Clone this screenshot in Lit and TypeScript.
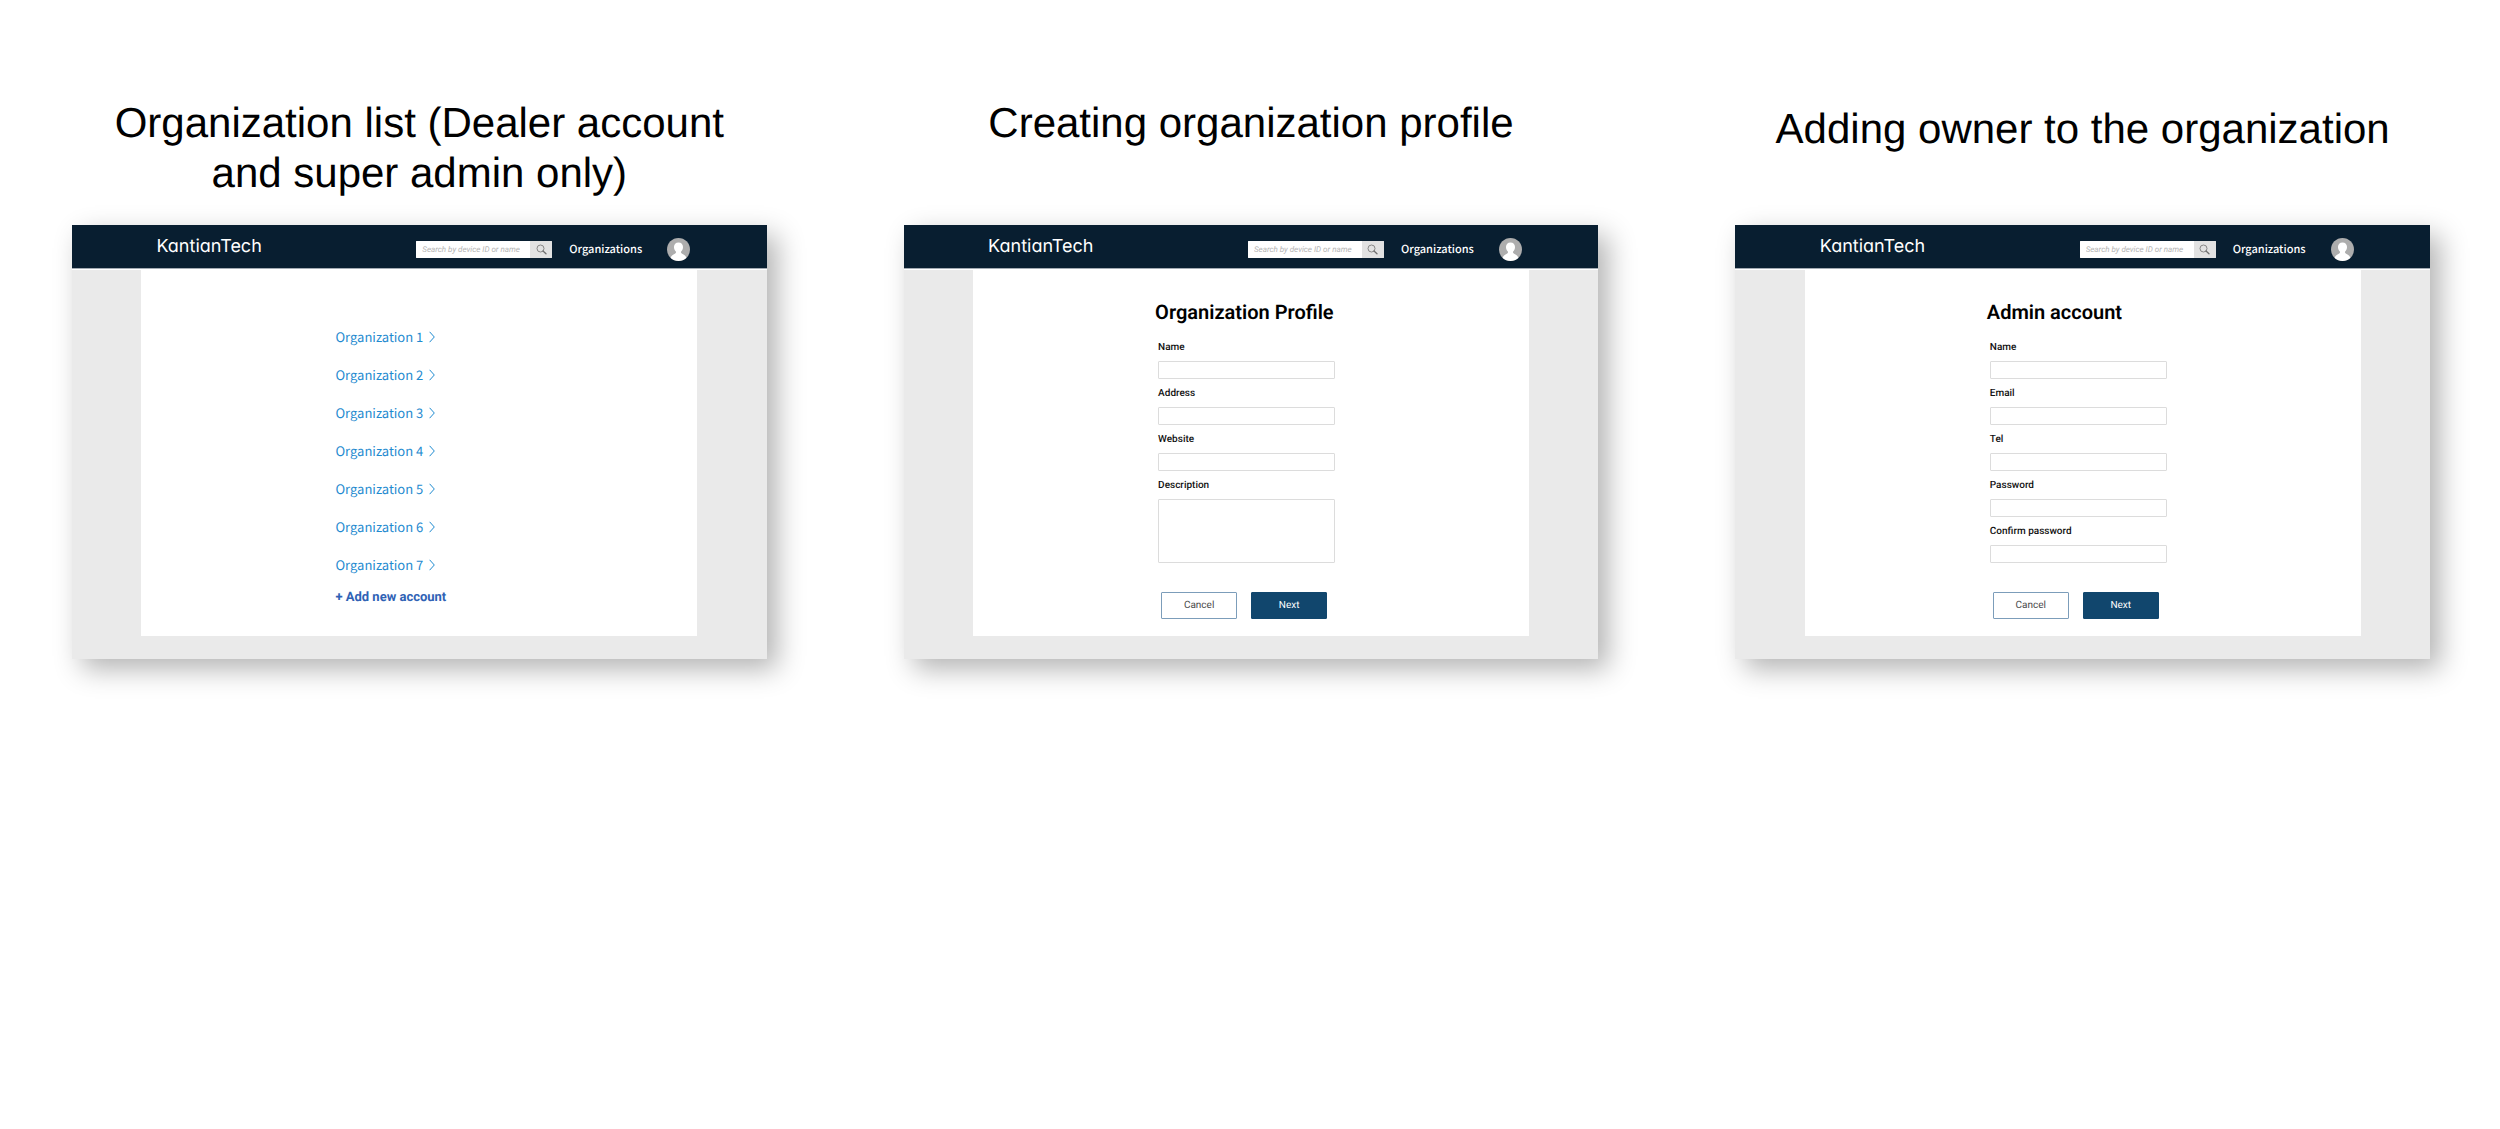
import { LitElement, html, css, svg } from "lit";
import { customElement, property } from "lit/decorators.js";

interface Field {
  id: string;
  label: string;
  type: "text" | "email" | "tel" | "url" | "password" | "textarea";
}

const ORGANIZATIONS = [1, 2, 3, 4, 5, 6, 7].map((n) => `Organization ${n}`);

const PROFILE_FIELDS: Field[] = [
  { id: "name", label: "Name", type: "text" },
  { id: "address", label: "Address", type: "text" },
  { id: "website", label: "Website", type: "url" },
  { id: "description", label: "Description", type: "textarea" },
];

const ADMIN_FIELDS: Field[] = [
  { id: "name", label: "Name", type: "text" },
  { id: "email", label: "Email", type: "email" },
  { id: "tel", label: "Tel", type: "tel" },
  { id: "password", label: "Password", type: "password" },
  { id: "confirm", label: "Confirm password", type: "password" },
];

const searchIcon = svg`
  <circle cx="4.500" cy="4.500" r="3.500" fill="none" stroke="#7d7d7d" stroke-width="0.900" />
  <path d="M7 7 L10 9.800" stroke="#6f6f6f" stroke-width="1.300" stroke-linecap="round" />
`;

const avatarIcon = svg`
  <circle cx="12" cy="12" r="12" fill="#adadad" />
  <path
    d="M12 4.700c-2.900 0-4.700 1.900-4.700 4.700 0 2 .9 3.900 2.100 5 .2 1-.2 1.500-1.200 2-2 1-3.700 2-4.400 4.400A12 12 0 0 0 12 24a12 12 0 0 0 8.200-3.200c-.7-2.400-2.400-3.400-4.400-4.400-1-.5-1.400-1-1.200-2 1.200-1.100 2.100-3 2.100-5 0-2.800-1.800-4.700-4.700-4.700z"
    fill="#fff"
  />
`;

/** Keeps glyph advances unrounded at the small sizes used by the screens. */
const textBase = css`
  * {
    text-rendering: geometricPrecision;
  }
`;

/** App frame shared by every screen: top bar, grey gutters and white panel. */
@customElement("app-frame")
class AppFrame extends LitElement {
  static styles = [
    textBase,
    css`
      :host {
        display: flex;
        flex-direction: column;
        background: #eaeaea;
        box-shadow: 10px 10px 26px rgba(0, 0, 0, 0.3);
      }
      .bar {
        box-sizing: border-box;
        display: flex;
        align-items: center;
        height: 44px;
        padding: 0 10%;
        background: #081e30;
        border-bottom: 1px solid #a3abb3;
        box-shadow: 0 1px #fff;
      }
      .inner {
        flex: 1;
        display: flex;
        align-items: center;
        padding: 5px 7px 0 15px;
      }
      .logo {
        margin-right: auto;
        padding-bottom: 4px;
        color: #fff;
        font: 400 18px/20px Inter, "Liberation Sans", sans-serif;
        font-feature-settings: "cv11";
        text-decoration: none;
      }
      .search {
        display: flex;
        width: 136px;
        height: 17px;
        border-radius: 1px;
        overflow: hidden;
        background: #fff;
      }
      .query {
        flex: 1;
        min-width: 0;
        border: 0;
        padding: 0 0 0 6px;
        outline: none;
        background: #fff;
        color: #333;
        font: italic 400 8px/17px Roboto, sans-serif;
      }
      .query::placeholder {
        color: #b4b4b4;
        opacity: 1;
      }
      .go {
        display: flex;
        align-items: center;
        justify-content: center;
        width: 22px;
        padding: 0;
        border: 0;
        background: #e2e2e2;
      }
      .link {
        margin: 0 25px 0 17px;
        color: #fff;
        font: 500 11px/17px "Noto Sans CJK SC", "Noto Sans", sans-serif;
        text-decoration: none;
      }
      .avatar {
        display: flex;
        padding: 0;
        border: 0;
        background: none;
      }
      .panel {
        flex: 1;
        display: flex;
        flex-direction: column;
        margin: 0 10% 23px;
        background: #fff;
        min-height: 367px;
      }
    `,
  ];

  render() {
    return html`
      <header class="bar">
        <div class="inner">
          <a class="logo" href="#">KantianTech</a>
          <form class="search" role="search">
            <input
              class="query"
              type="search"
              aria-label="Search"
              placeholder="Search by device ID or name"
            />
            <button class="go" type="button" aria-label="Search">
              <svg width="11" height="11" viewBox="0 0 11 11">${searchIcon}</svg>
            </button>
          </form>
          <a class="link" href="#organizations">Organizations</a>
          <button class="avatar" type="button" aria-label="Account">
            <svg width="23" height="23" viewBox="0 0 24 24">${avatarIcon}</svg>
          </button>
        </div>
      </header>
      <main class="panel"><slot></slot></main>
    `;
  }
}

@customElement("organization-list")
class OrganizationList extends LitElement {
  static styles = [
    textBase,
    css`
      :host {
        display: block;
        padding: 49px 20px 0 194px;
      }
      .list {
        margin: 0;
        padding: 0;
        list-style: none;
      }
      .item {
        height: 38px;
        display: flex;
        align-items: center;
      }
      .org {
        display: flex;
        align-items: center;
        gap: 6px;
        color: #1f8bd0;
        font: 400 13px/20px "Noto Sans CJK SC", "Noto Sans", sans-serif;
        text-decoration: none;
      }
      .add {
        padding: 0;
        border: 0;
        background: none;
        color: #2f62b5;
        font: 700 13px/28px Roboto, sans-serif;
      }
    `,
  ];

  render() {
    return html`
      <ul class="list">
        ${ORGANIZATIONS.map(
          (name) => html`
            <li class="item">
              <a class="org" href="#organization">
                ${name}
                <svg width="6" height="12" viewBox="0 0 6 12" aria-hidden="true">
                  <path d="M0.600 0.800 L5.300 6 L0.600 11.200" fill="none" stroke="#1f8bd0" />
                </svg>
              </a>
            </li>
          `
        )}
      </ul>
      <button class="add" type="button">+ Add new account</button>
    `;
  }
}

@customElement("account-form")
class AccountForm extends LitElement {
  @property() heading = "";
  @property({ attribute: false }) fields: Field[] = [];

  static styles = [
    textBase,
    css`
      :host {
        flex: 1;
        display: flex;
        padding: 31px 20px 17px 182px;
      }
      .form {
        flex: 1;
        display: flex;
        flex-direction: column;
        align-items: flex-start;
      }
      .heading {
        margin: 0 0 18px;
        color: #000;
        font: 600 20px/24px Roboto, sans-serif;
      }
      .fields {
        display: grid;
        gap: 9px;
        margin-left: 3px;
      }
      .field {
        display: grid;
        gap: 7px;
      }
      .label {
        color: #111;
        font: 500 10px/12px Roboto, sans-serif;
      }
      .control {
        box-sizing: border-box;
        width: 177px;
        height: 18px;
        padding: 0 4px;
        border: 1px solid #dcdcdc;
        border-radius: 1px;
        background: #fff;
        font: 400 10px/12px Roboto, sans-serif;
        resize: none;
      }
      .control.tall {
        height: 64px;
      }
      .actions {
        display: flex;
        gap: 14px;
        margin: auto 0 0 6px;
      }
      .button {
        box-sizing: border-box;
        width: 76px;
        height: 27px;
        padding: 0;
        border: 1px solid #7c9dba;
        border-radius: 1px;
        background: #fff;
        color: #4a4a4a;
        font: 400 10px/12px Roboto, sans-serif;
      }
      .button.primary {
        border-color: #11466d;
        background: #11466d;
        color: #fff;
      }
    `,
  ];

  private renderField(field: Field) {
    return html`
      <div class="field">
        <label class="label" for=${field.id}>${field.label}</label>
        ${field.type === "textarea"
          ? html`<textarea class="control tall" id=${field.id}></textarea>`
          : html`<input class="control" id=${field.id} type=${field.type} />`}
      </div>
    `;
  }

  render() {
    return html`
      <form class="form">
        <h2 class="heading">${this.heading}</h2>
        <div class="fields">${this.fields.map((f) => this.renderField(f))}</div>
        <div class="actions">
          <button class="button" type="button">Cancel</button>
          <button class="button primary" type="button">Next</button>
        </div>
      </form>
    `;
  }
}

@customElement("app-root")
class AppRoot extends LitElement {
  static styles = [
    textBase,
    css`
      :host {
        display: block;
        min-height: 100vh;
        background: #fff;
      }
      .board {
        display: grid;
        grid-template-columns: repeat(3, minmax(0, 1fr));
        grid-template-rows: 127px auto;
        column-gap: 137px;
        padding: 98px 70px 80px 72px;
      }
      .title {
        margin: 0;
        padding: 0 40px;
        color: #000;
        font: 400 42px/50px "Liberation Sans", Arial, sans-serif;
        text-align: center;
      }
      .title.lowered {
        padding-top: 6px;
      }
    `,
  ];

  render() {
    return html`
      <div class="board">
        <h1 class="title">Organization list (Dealer account and super admin only)</h1>
        <h1 class="title">Creating organization profile</h1>
        <h1 class="title lowered">Adding owner to the organization</h1>
        <app-frame><organization-list></organization-list></app-frame>
        <app-frame>
          <account-form heading="Organization Profile" .fields=${PROFILE_FIELDS}></account-form>
        </app-frame>
        <app-frame>
          <account-form heading="Admin account" .fields=${ADMIN_FIELDS}></account-form>
        </app-frame>
      </div>
    `;
  }
}
